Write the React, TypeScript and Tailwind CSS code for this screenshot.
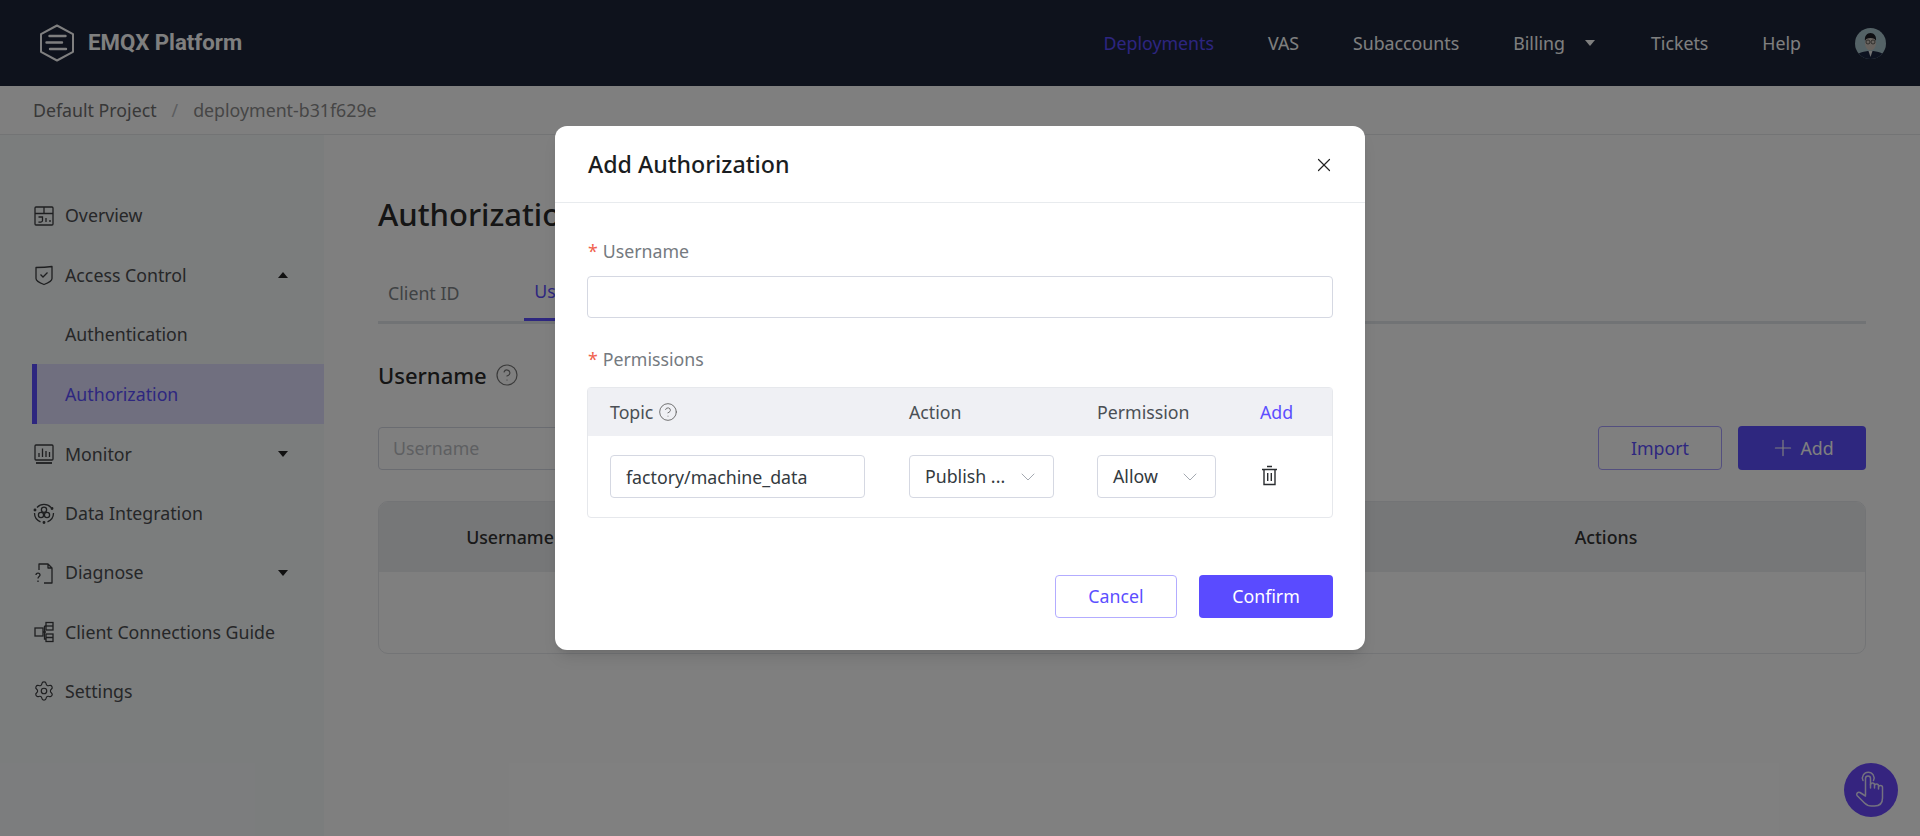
import { ChevronDown, CircleHelp, Plus, Settings, X } from "lucide-react";
import type { FC, ReactNode } from "react";

const Caret: FC<{ up?: boolean; className?: string }> = ({ up, className }) => (
  <svg width="12" height="8" viewBox="0 0 12 8" className={className}>
    <path d={up ? "M6 1l5 6H1z" : "M6 7L1 1h10z"} fill="currentColor" />
  </svg>
);

const Logo = () => (
  <svg width="36" height="38" viewBox="0 0 36 38" fill="none" stroke="#fff" strokeWidth="2">
    <path d="M18 1.500L34 10.200V27.800L18 36.500L2 27.800V10.200Z" strokeLinejoin="round" />
    <path d="M10.500 12h16M7.500 18.500h15.500M11 25h16" strokeWidth="2.400" strokeLinecap="round" />
  </svg>
);

const iconProps = {
  width: 22,
  height: 22,
  viewBox: "0 0 22 22",
  fill: "none",
  stroke: "currentColor",
  strokeWidth: 1.3,
};

const OverviewIcon = () => (
  <svg {...iconProps}>
    <rect x="2" y="2" width="18" height="18" rx="1" />
    <path d="M2 8.500h18M11 2v6.500M5.500 12h4v3.500c0 1.500-2 2-4 1.500M13 13v4M17 15v2" />
  </svg>
);

const ShieldIcon = () => (
  <svg {...iconProps}>
    <path d="M3 3.500c5 0 9 0 16-1v12c0 2-4 4.500-8 6-4-1.500-8-4-8-6z" strokeLinejoin="round" />
    <path d="M7.500 10.500l2.500 2.500 4.500-4.500" />
  </svg>
);

const MonitorIcon = () => (
  <svg {...iconProps}>
    <rect x="2" y="2" width="18" height="15" rx="1" />
    <path d="M6 14V10M9.500 14V5.500M13 14V8M16.500 14V9" />
    <path d="M3 20h16" strokeWidth="1.800" />
  </svg>
);

const IntegrationIcon = () => (
  <svg {...iconProps}>
    <path d="M4 5.500A9.500 9.500 0 0 1 18 5.500M20.500 11a9.500 9.500 0 0 1-6 8.800M7.500 19.800a9.500 9.500 0 0 1-6-8.800" />
    <circle cx="11" cy="7.800" r="2.600" />
    <circle cx="8" cy="13" r="2.600" />
    <circle cx="14" cy="13" r="2.600" />
    <circle cx="19" cy="6.500" r="0.800" fill="currentColor" />
    <circle cx="11" cy="20.500" r="0.800" fill="currentColor" />
    <circle cx="2" cy="8" r="0.800" fill="currentColor" />
  </svg>
);

const DiagnoseIcon = () => (
  <svg {...iconProps}>
    <path d="M6 8V2h9l4 4v15h-8M15 2v4h4" strokeLinejoin="round" />
    <path d="M3 13c0-2.500 4-2.500 4 0 0 1.500-2 1.500-2 3.500M5 18.500v1.500" />
  </svg>
);

const GuideIcon = () => (
  <svg {...iconProps}>
    <rect x="2" y="7" width="8" height="8" />
    <rect x="13" y="1.500" width="7" height="7.500" />
    <path d="M13 5h7" />
    <rect x="13" y="13" width="7" height="7.500" />
    <path d="M13 16.500h7M10 11h3M11.500 5V18h1.500M11.500 5h1.500" />
  </svg>
);

const TrashIcon = () => (
  <svg width="17" height="21" viewBox="0 0 17 21" fill="none" stroke="#2a2d30" strokeWidth="1.400" className="-mt-[2px] ml-px">
    <path d="M1 4.500h15M6 1.500h5M3 4.500V19.500H14V4.500M6.700 8v8M10.300 8v8" />
  </svg>
);

const HandIcon = () => (
  <svg width="36" height="38" viewBox="0 0 36 38" fill="none" stroke="#fff" strokeWidth="1.500" strokeLinecap="round" strokeLinejoin="round" opacity="0.85">
    <path d="M10 9.500A5.800 5.800 0 1 1 20.500 9.500" />
    <path d="M12.500 24V7.500a2.500 2.500 0 0 1 5 0V17" />
    <path d="M17.500 14a2 2 0 0 1 4 0v3M21.500 15a2 2 0 0 1 4 0v3M25.500 16.500a2 2 0 0 1 4 0V27c0 5-3 8-8 8h-3c-3 0-5-1-7-3L4 24.500a2.200 2.200 0 0 1 3-3L12.500 25" />
  </svg>
);

const Avatar = () => (
  <svg width="31" height="31" viewBox="0 0 31 31" className="rounded-full">
    <rect width="31" height="31" fill="#a9c4cc" />
    <path d="M0 31c1-6 8-8 15.500-8S30 25 31 31z" fill="#1a2440" />
    <path d="M13.500 23l2 6 2-6z" fill="#e8e8e8" />
    <ellipse cx="15.500" cy="15" rx="5.500" ry="7.500" fill="#cfc5bd" />
    <path d="M10 13c-.8-5 2-8 5.500-8s6.300 3 5.500 8c-.6-2-2.500-3-5.500-3s-4.900 1-5.500 3z" fill="#1c1c24" />
    <circle cx="13" cy="14" r="2" fill="none" stroke="#333" strokeWidth="0.700" />
    <circle cx="18" cy="14" r="2" fill="none" stroke="#333" strokeWidth="0.700" />
  </svg>
);

const NavItem: FC<{ icon: ReactNode; label: string; caret?: "up" | "down" }> = ({ icon, label, caret }) => (
  <div className="ml-8 flex h-[59.4px] items-center pl-px pr-[35px]">
    <span className="flex w-[32px] shrink-0 text-[#3c3e40]">{icon}</span>
    <span className="flex-1 whitespace-nowrap">{label}</span>
    {caret && <Caret up={caret === "up"} className="text-[#222]" />}
  </div>
);

const SelectBox: FC<{ value: string; className: string }> = ({ value, className }) => (
  <div className={`flex h-[43px] items-center justify-between rounded-[4px] border border-[#d5d8e2] pl-[15px] pr-[13px] text-[#333a40] ${className}`}>
    <span className="whitespace-nowrap">{value}</span>
    <ChevronDown size={24} strokeWidth={0.9} className="text-[#9a9fa8]" />
  </div>
);

export default function App() {
  return (
    <div className="relative flex h-screen flex-col overflow-hidden bg-white font-['Noto_Sans',sans-serif] text-[17.75px]">
      <header className="flex h-[86px] shrink-0 items-center bg-[#1c2438] pl-[39px] pr-[34px] text-white">
        <Logo />
        <span className="ml-[13px] font-['Roboto',sans-serif] text-[22.2px] font-bold">EMQX Platform</span>
        <nav className="ml-auto flex items-center gap-[54px]">
          <a className="text-[#5a4bff]">Deployments</a>
          <a>VAS</a>
          <a>Subaccounts</a>
          <a className="flex items-center gap-[19px]">
            Billing
            <Caret className="mr-px" />
          </a>
          <a>Tickets</a>
          <a>Help</a>
          <Avatar />
        </nav>
      </header>

      <div className="flex h-[49px] shrink-0 items-center border-b border-[#e6e8ea] pl-[33px] text-[#8c8c8c]">
        <span className="text-[#707070]">Default Project</span>
        <span className="mx-[15px] text-[#b8bbbe]">/</span>
        <span>deployment-b31f629e</span>
      </div>

      <div className="flex flex-1">
        <aside className="w-[324px] shrink-0 bg-[#f7fafb] pt-[51px] text-[#4c4e50]">
          <NavItem icon={<OverviewIcon />} label="Overview" />
          <NavItem icon={<ShieldIcon />} label="Access Control" caret="up" />
          <div className="ml-8 flex h-[59.4px] items-center pl-[33px]">Authentication</div>
          <div className="ml-8 flex h-[60px] items-center border-l-[5px] border-[#5c4eff] bg-[#e0deff] pl-[28px] text-[#5c4eff]">Authorization</div>
          <NavItem icon={<MonitorIcon />} label="Monitor" caret="down" />
          <NavItem icon={<IntegrationIcon />} label="Data Integration" />
          <NavItem icon={<DiagnoseIcon />} label="Diagnose" caret="down" />
          <NavItem icon={<GuideIcon />} label="Client Connections Guide" />
          <NavItem icon={<Settings size={22} strokeWidth={1.3} />} label="Settings" />
        </aside>

        <main className="flex-1 px-[54px] pt-[57px]">
          <h1 className="h-[44px] text-[31px] font-medium leading-[44px] text-[#2a2a2a]">Authorization</h1>
          <div className="mt-[29px] flex h-[59px] gap-[55px] border-b-[3px] border-[#e3e6ea] text-[#808488]">
            <div className="flex items-center px-[10px]">Client ID</div>
            <div className="flex items-center border-b-[3px] border-[#5c4eff] px-[10px] text-[#5c4eff]">Username</div>
          </div>
          <div className="mt-[36px] flex h-[30px] items-center gap-[8px]">
            <h2 className="text-[22px] font-medium text-[#2a2a2a]">Username</h2>
            <CircleHelp size={24} strokeWidth={1.2} className="text-[#777]" />
          </div>
          <div className="mt-[36px] flex items-center justify-between">
            <input
              placeholder="Username"
              className="h-[43px] w-[300px] rounded-[4px] border border-[#d5d8e2] bg-white px-[14px] outline-none placeholder:text-[#bcbfc4]"
            />
            <div className="flex gap-4">
              <button className="h-[44px] w-[124px] rounded-[4px] border border-[#a79fff] text-[#5c4eff]">Import</button>
              <button className="flex h-[44px] w-[128px] items-center justify-center gap-[4px] rounded-[4px] bg-[#5c4eff] text-white">
                <Plus size={26} strokeWidth={1.1} />
                Add
              </button>
            </div>
          </div>
          <div className="mt-[31px] h-[153px] overflow-hidden rounded-[10px] border border-[#e6e8ec]">
            <div className="flex h-[70px] items-center bg-[#eceef1] font-medium text-[#333]">
              <div className="w-[262px] text-center">Username</div>
              <div className="flex-1" />
              <div className="w-[518px] text-center">Actions</div>
            </div>
          </div>
        </main>
      </div>

      <button className="absolute bottom-[19px] right-[22px] flex h-[54px] w-[54px] items-center justify-center rounded-full bg-[#6a49ff]">
        <HandIcon />
      </button>

      <div className="absolute inset-0 flex justify-center bg-black/50 pt-[126px]">
        <div className="h-[524px] w-[810px] rounded-[12px] bg-white shadow-lg">
          <div className="flex h-[77px] items-center justify-between border-b border-[#e8ebee] pl-[33px] pr-[30px]">
            <h3 className="text-[23.2px] font-medium text-[#1a1d21]">Add Authorization</h3>
            <X size={22} strokeWidth={1.3} className="mt-[2px] text-[#222]" />
          </div>
          <div className="px-[32px] pt-[35px]">
            <label className="flex h-[26px] items-center pl-px text-[#757a80]">
              <span className="mr-[5px] text-[#f0624d]">*</span>Username
            </label>
            <input className="mt-[12px] block h-[42px] w-full rounded-[4px] border border-[#d5d8e2] outline-none" />
            <label className="mt-[28px] flex h-[26px] items-center pl-px text-[#757a80]">
              <span className="mr-[5px] text-[#f0624d]">*</span>Permissions
            </label>
            <div className="mt-[15px] h-[131px] rounded-[4px] border border-[#e6e8ec]">
              <div className="grid h-[48px] grid-cols-[299px_188px_163px_1fr] items-center bg-[#eff0f4] pl-[22px] text-[#4a4f55]">
                <div className="flex items-center gap-[5px]">
                  Topic
                  <CircleHelp size={20} strokeWidth={1.1} className="text-[#666]" />
                </div>
                <div>Action</div>
                <div>Permission</div>
                <div className="text-[#5c4eff]">Add</div>
              </div>
              <div className="grid grid-cols-[299px_188px_163px_1fr] items-center pl-[22px] pt-[19px]">
                <input
                  defaultValue="factory/machine_data"
                  className="h-[43px] w-[255px] rounded-[4px] border border-[#d5d8e2] px-[15px] text-[#333a40] outline-none"
                />
                <SelectBox value="Publish ..." className="w-[145px]" />
                <SelectBox value="Allow" className="w-[119px]" />
                <TrashIcon />
              </div>
            </div>
            <div className="mt-[57px] flex justify-end gap-[22px]">
              <button className="h-[43px] w-[122px] rounded-[4px] border border-[#b3acff] text-[#5c4eff]">Cancel</button>
              <button className="h-[43px] w-[134px] rounded-[4px] bg-[#5a4bff] text-white">Confirm</button>
            </div>
          </div>
        </div>
      </div>
    </div>
  );
}
